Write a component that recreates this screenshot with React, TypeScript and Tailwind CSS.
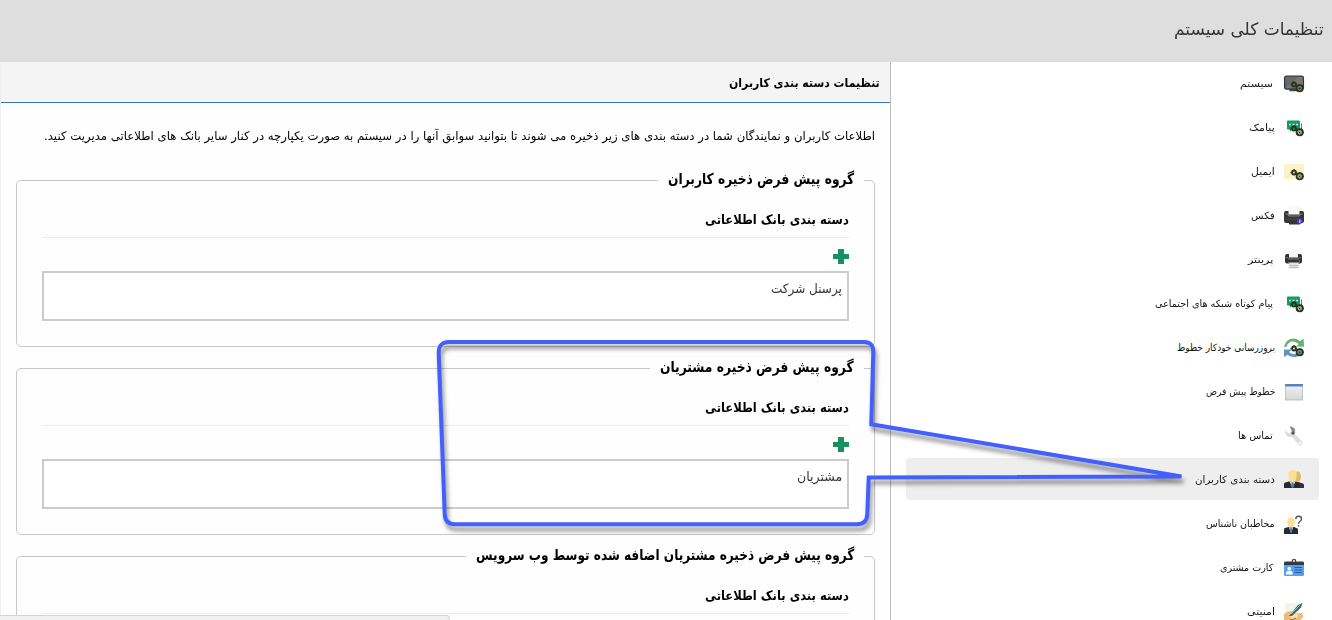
import { useLayoutEffect, useRef, useState, type ReactNode } from 'react';

type FitProps = { children: string; width: number; className?: string };

/* Right-aligned label that is condensed or widened to fill a given width. */
function Fit({ children, width, className = '' }: FitProps) {
  const ref = useRef<HTMLSpanElement>(null);
  const [scale, setScale] = useState(1);
  useLayoutEffect(() => {
    if (ref.current) setScale(width / ref.current.offsetWidth);
  }, [width, children]);
  return (
    <span className={`flex shrink-0 justify-start whitespace-nowrap ${className}`} style={{ width }}>
      <span ref={ref} className="block shrink-0 origin-right" style={{ transform: `scaleX(${scale})` }}>
        {children}
      </span>
    </span>
  );
}

function Svg({ children }: { children: ReactNode }) {
  return (
    <svg viewBox="0 0 20 20" className="h-5 w-5 shrink-0 overflow-visible">
      {children}
    </svg>
  );
}

function Gears() {
  return (
    <g fill="none" stroke="#27351c">
      <circle cx="10" cy="10.500" r="1.900" strokeWidth="2" />
      <circle cx="15.700" cy="14.300" r="3.100" strokeWidth="1.900" />
      <circle cx="15.700" cy="14.300" r="1.700" stroke="#6f8a5a" strokeWidth="1" />
      <circle cx="15.700" cy="14.300" r="0.900" fill="#27351c" stroke="none" />
      <path d="M6.500 10.500h.8M12.500 11l1.500 1M10 7.300v.8M15.700 10v.8M19.200 14.300h.8" strokeWidth="1.300" />
    </g>
  );
}

const MonitorIcon = () => (
  <Svg>
    <path d="M6 15h8l1 2.300H5z" fill="#4c4b58" />
    <rect x="0.600" y="2.200" width="18.800" height="12.800" rx="1.800" fill="#696969" stroke="#343440" strokeWidth="1.300" />
    <path d="M1.300 14.300 14 2.900h4.700v11.400z" fill="#777" />
    <Gears />
  </Svg>
);

const ChatIcon = () => (
  <Svg>
    <path d="M4 2.500h11q1 0 1 1v7q0 1-1 1H8L6 14l-.4-2.500H4q-1 0-1-1v-7q0-1 1-1z" fill="#159a67" />
    <path d="M17.500 5.500v7" stroke="#159a67" strokeWidth="1" />
    <path d="M5 6.500h1.800M8.600 6.500h1.800M12.200 6.500H14" stroke="#d9f4e8" strokeWidth="1.500" />
    <Gears />
  </Svg>
);

const MailIcon = () => (
  <Svg>
    <rect y="2" width="20" height="15" rx="1.600" fill="#fcf1c7" />
    <path d="m1 16 7-6M19 16l-7-6" stroke="#f0e5bd" />
    <path d="M.5 3 10 11l9.500-8" fill="#fff3ca" stroke="#f6ebc2" strokeWidth=".6" />
    <Gears />
  </Svg>
);

const FaxIcon = () => (
  <Svg>
    <rect x="4.500" y="0.500" width="11" height="8" fill="#f8f8f8" />
    <path d="M0 7q0-2 2-2h2.500v3.500h11V5H18q2 0 2 2v8q0 2-2 2h-2v1.500H5V17H2q-2 0-2-2z" fill="#353535" />
    <path d="M1.500 8h2l1.300 2h10.400l1.300-2h2" fill="none" stroke="#9a9a9a" strokeWidth=".8" />
    <path d="M1 13h18" stroke="#4a4a4a" />
    <circle cx="15.800" cy="15.300" r="2.700" fill="#4740d5" />
    <path d="M15.800 13.800v3" stroke="#bdbaff" strokeWidth="1.500" />
  </Svg>
);

const PrinterIcon = () => (
  <Svg>
    <rect x="5" y="0.500" width="9" height="7" fill="#f8f8f8" />
    <path d="M1 6q0-2 2-2h2v3.500h9V4h2q2 0 2 2v5.500q0 2-2 2H3q-2 0-2-2z" fill="#323232" />
    <path d="M1.500 7.500h2l1.200 1.500h9.600l1.200-1.500h2" fill="none" stroke="#8d8d8d" strokeWidth=".8" />
    <path d="M5.500 12.500h8.500l1.300 6H4.500z" fill="#e2e2e2" />
    <path d="M5.600 15.500h8.500M5.200 17.500h9.300" stroke="#b5b5b5" strokeWidth=".8" />
    <path d="M4 12.500h11.500" stroke="#8a8a8a" strokeWidth=".7" />
    <circle cx="15.300" cy="11" r=".7" fill="#32a8ac" />
  </Svg>
);

const SyncIcon = () => (
  <Svg>
    <path d="M.2 9C1.500 1.200 9.500-2.200 16 3l3.600-2.200.4 8-7.800-.2 2.500-2.500C10 1.700 4 3.200 2.500 9z" fill="#68b274" />
    <path d="M0 11.500h7.500L5.200 14c3 3 7.300 3 9.800-1l4.500-.5C17.500 19 9.500 21 3.500 16.800L0 19z" fill="#5f94c9" />
    <Gears />
  </Svg>
);

const WindowIcon = () => (
  <Svg>
    <defs>
      <linearGradient id="windowBody" x2="0" y2="1">
        <stop stopColor="#f1f3f3" />
        <stop offset="1" stopColor="#d4d7d3" />
      </linearGradient>
    </defs>
    <rect x="1.500" y="2.500" width="17" height="15.500" fill="url(#windowBody)" stroke="#b4b9b9" strokeWidth=".8" />
    <path d="M1.100 2h17.800v2.500H1.100z" fill="#5583c0" />
  </Svg>
);

const WrenchIcon = () => (
  <Svg>
    <path d="M5.500.5q5-.3 6 4 .3 2-.5 3.500l7 7.500q1 2-.7 3.500-2 1-3.300-.5L8.500 11Q2.500 12 1 7L.8 4 5 7.500l3-1.800z" fill="#dedede" />
    <path d="M5.800.6q4.500.3 5.200 4L9.500 7 7.800 5z" fill="#8b8b8b" />
    <circle cx="9" cy="7" r="1.700" fill="#555" />
    <circle cx="15.700" cy="16.800" r="1.200" fill="#fff" />
  </Svg>
);

const UsersIcon = () => (
  <Svg>
    <path d="M11 18v-4.500l3-1.500 5 1.500q1 .5 1 1.500v3z" fill="#303233" />
    <ellipse cx="13.700" cy="6.500" rx="3.300" ry="5.300" fill="#dcbd70" />
    <path d="M0 18v-4q0-1 1.200-1.400L5 11.500h7l4 1.500v5z" fill="#282a2b" />
    <path d="M4.300 4.500Q4.300 0 8.500 0t4.200 4.500q0 7-4.200 7.700-4.200-.7-4.200-7.700z" fill="#ffdf93" />
    <path d="M5.500 11.200 8.500 12.500l3-1.300L8.500 18z" fill="#e6edf7" />
    <path d="M7.500 12.500h2l.7 3.500-1.700 2-1.500-2z" fill="#4f7dbe" />
  </Svg>
);

const UnknownIcon = () => (
  <Svg>
    <path d="M0 20v-4.500q0-1 1.200-1.400L4.500 13h5.500l3 1.200q1 .3 1 1.300V20z" fill="#26282a" />
    <path d="M3.300 7.500Q3.300 3.500 7 3.500t3.700 4q0 5.500-3.700 6-3.700-.5-3.700-6z" fill="#ffe09a" />
    <path d="M4.700 13 7 13.800 9.300 13 7 19z" fill="#e6edf7" />
    <path d="M6.200 14h1.600l.5 3L7 19l-1.200-2z" fill="#4d7fc2" />
    <path d="M11.700 5q.3-2.700 3-2.700Q17.500 2.300 17.500 5q0 1.500-1.700 2.500-1.300.8-1.300 2.200" fill="none" stroke="#555" strokeWidth="1.400" />
    <circle cx="14.500" cy="11.800" r=".9" fill="#555" />
  </Svg>
);

const CardIcon = () => (
  <Svg>
    <rect y="4" width="20" height="14" rx="1.300" fill="#569ff3" />
    <path d="M0 7V5Q0 3.500 1.500 3.500h17Q20 3.500 20 5v2z" fill="#333b3b" />
    <circle cx="10" cy="3" r="1.700" fill="#ddd" stroke="#353535" strokeWidth="1.100" />
    <circle cx="5.300" cy="10.500" r="1.800" fill="#fff" />
    <path d="M1.800 16.500q0-4 3.500-4t3.500 4z" fill="#fff" />
    <path d="M10.500 9.500h7.500M10.500 12h7.500M10.500 14.500h7.500" stroke="#285e9c" strokeWidth="1.200" />
  </Svg>
);

const SignIcon = () => (
  <Svg>
    <path d="M1 1h14v13H1z" fill="#f1f4ed" />
    <path d="M0 12q3-3.500 8-2.500l5 2 5-.5 1.500 4-5.500 5H0z" fill="#edbd77" />
    <path d="m5 13 4-3 5 2.500-1 3.500-5 1z" fill="#fae0b2" />
    <path d="M5 14 14 3l4.500-2L17 5.500 8 14z" fill="#3b6c6b" />
    <path d="M7 12 16 3" stroke="#95c2b6" />
    <path d="M2 19q7-1 10-3" stroke="#9c6c35" fill="none" />
  </Svg>
);

const items = [
  { label: 'سیستم', width: 33, inset: 'pr-[11px]', icon: <MonitorIcon /> },
  { label: 'پیامک', width: 26, inset: 'pr-[9px]', icon: <ChatIcon /> },
  { label: 'ایمیل', width: 24, inset: 'pr-[9px]', icon: <MailIcon /> },
  { label: 'فکس', width: 24, inset: 'pr-[9px]', icon: <FaxIcon /> },
  { label: 'پرینتر', width: 25, inset: 'pr-[11px]', icon: <PrinterIcon /> },
  { label: 'پیام کوتاه شبکه های اجتماعی', width: 118, inset: 'pr-[11px]', icon: <ChatIcon /> },
  { label: 'بروزرسانی خودکار خطوط', width: 98, inset: 'pr-[9px]', icon: <SyncIcon /> },
  { label: 'خطوط پیش فرض', width: 69, inset: 'pr-[9px]', icon: <WindowIcon /> },
  { label: 'تماس ها', width: 35, inset: 'pr-[11px]', icon: <WrenchIcon /> },
  { label: 'دسته بندی کاربران', width: 80, inset: 'pr-[9px]', icon: <UsersIcon />, active: true },
  { label: 'مخاطبان ناشناس', width: 69, inset: 'pr-[9px]', icon: <UnknownIcon /> },
  { label: 'کارت مشتری', width: 53, inset: 'pr-[11px]', icon: <CardIcon /> },
  { label: 'امنیتی', width: 28, inset: 'pr-[9px]', icon: <SignIcon /> },
];

const groups = [
  { title: 'گروه پیش فرض ذخیره کاربران', width: 186, value: 'پرسنل شرکت', valueWidth: 71 },
  { title: 'گروه پیش فرض ذخیره مشتریان', width: 194, value: 'مشتریان', valueWidth: 45 },
  { title: 'گروه پیش فرض ذخیره مشتریان اضافه شده توسط وب سرویس', width: 378, value: '', valueWidth: 0 },
];

function Group({ title, width, value, valueWidth }: (typeof groups)[number]) {
  return (
    <section className="flex h-[167px] shrink-0 flex-col rounded-[5px] border border-[#c8c8c8] px-[25px]">
      <div className="-mt-[14px] -mr-[15px] mb-px flex h-6 items-center self-start bg-[#fefefe] px-2.5">
        <Fit width={width} className="text-[15px] leading-6 font-bold text-black">{title}</Fit>
      </div>
      <div className="flex h-[46px] shrink-0 items-center border-b border-[#ececec] pt-2.5">
        <Fit width={144} className="text-[13px] leading-5 font-bold text-black">دسته بندی بانک اطلاعاتی</Fit>
      </div>
      <div className="flex h-[33px] shrink-0 items-center pt-[3px]">
        <svg viewBox="0 0 16 15" className="h-[15px] w-4">
          <path d="M5 0h6v5h5v5h-5v5H5v-5H0V5h5z" fill="#16915f" />
        </svg>
      </div>
      <div className="h-[50px] shrink-0 border-2 border-[#cbcbcb] bg-white px-[5px] pt-1.5">
        {value && <Fit width={valueWidth} className="text-[13px] leading-5 text-[#333]">{value}</Fit>}
      </div>
    </section>
  );
}

export default function App() {
  return (
    <div
      dir="rtl"
      className="relative flex h-[620px] w-[1332px] flex-col overflow-hidden bg-white font-['DejaVu_Sans_Condensed','DejaVu_Sans',sans-serif]"
    >
      <header className="flex h-[62px] shrink-0 items-center bg-[#dedede] pr-2 pb-1">
        <Fit width={150} className="text-[17px] leading-7 text-[#333]">تنظیمات کلی سیستم</Fit>
      </header>
      <div className="flex min-h-0 flex-1">
        <aside className="flex w-[441px] shrink-0 flex-col gap-0.5 pr-[13px] pl-[15px]">
          {items.map((item) => (
            <div
              key={item.label}
              className={`flex h-[42px] shrink-0 items-center rounded pt-0.5 pr-[15px] ${item.active ? 'bg-[#eeeeee]' : ''}`}
            >
              {item.icon}
              <div className={item.inset}>
                <Fit width={item.width} className="text-[10px] leading-5 text-[#111]">{item.label}</Fit>
              </div>
            </div>
          ))}
        </aside>
        <main className="flex min-w-0 flex-1 flex-col border-r border-l border-r-[#bdbdbd] border-l-[#f0f0f0] bg-[#fefefe]">
          <div className="flex h-[41px] shrink-0 items-center border-b border-[#337ab7] bg-[#f4f4f4] pt-0.5 pr-2.5">
            <Fit width={151} className="text-[12px] leading-5 font-bold text-black">تنظیمات دسته بندی کاربران</Fit>
          </div>
          <div className="flex h-[77px] shrink-0 items-start pt-[23px] pr-[15px]">
            <Fit width={831} className="text-[12px] leading-5 text-black">
              اطلاعات کاربران و نمایندگان شما در دسته بندی های زیر ذخیره می شوند تا بتوانید سوابق آنها را در سیستم به صورت یکپارچه در کنار سایر بانک های اطلاعاتی مدیریت کنید.
            </Fit>
          </div>
          <div className="flex flex-col gap-[21px] px-[15px]">
            {groups.map((group) => (
              <Group key={group.title} {...group} />
            ))}
          </div>
        </main>
      </div>
      <div className="absolute bottom-0 left-0 h-[5px] w-[450px] rounded-tr border-t border-r border-[#d4d4d4] bg-[#f1f1f1]" />
      <svg viewBox="0 0 1332 620" className="pointer-events-none absolute inset-0 h-[620px] w-[1332px]">
        <path
          d="M449 342H864Q873.500 342 873.300 352L871.300 424.300 1181.500 476.500 868.700 477.500 867.300 514Q867 524.300 857 524.300H455Q445 524.300 444.700 514L438.700 353Q438.500 342 449 342Z"
          fill="none"
          stroke="#425fff"
          strokeWidth="4"
          strokeLinejoin="miter"
          className="drop-shadow-[2px_5px_2px_rgba(0,0,0,0.42)]"
        />
      </svg>
    </div>
  );
}
